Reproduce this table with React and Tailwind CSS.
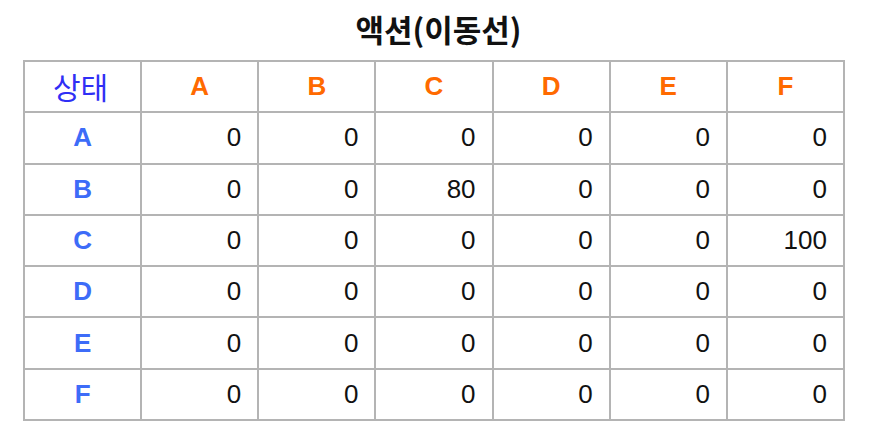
const COLS = ["A", "B", "C", "D", "E", "F"];

const ROWS = [
  { key: "A", values: [0, 0, 0, 0, 0, 0] },
  { key: "B", values: [0, 0, 80, 0, 0, 0] },
  { key: "C", values: [0, 0, 0, 0, 0, 100] },
  { key: "D", values: [0, 0, 0, 0, 0, 0] },
  { key: "E", values: [0, 0, 0, 0, 0, 0] },
  { key: "F", values: [0, 0, 0, 0, 0, 0] },
];

const cell = "h-[51.3px] border-r-2 border-b-2 border-[#b4b4b4] flex items-center";

export default function App() {
  return (
    <div className="w-[875px] h-[433px] bg-white font-['Liberation_Sans','Noto_Sans_CJK_KR',sans-serif]">
      {/* Title */}
      <div className="h-[60px] flex items-center justify-center pb-1 pl-[2px]">
        <h1 className="text-[31px] font-bold text-[#111] font-['Noto_Sans_CJK_KR',sans-serif] leading-none">
          액션(이동선)
        </h1>
      </div>

      {/* Q table */}
      <div className="ml-[23px] w-[822px] grid grid-cols-7 border-t-2 border-l-2 border-[#b4b4b4]">
        <div className={`${cell} justify-center pr-1 text-[30px] text-[#2f2ff5] font-['Noto_Sans_CJK_KR',sans-serif]`}>
          상태
        </div>
        {COLS.map(c => (
          <div key={c} className={`${cell} justify-center text-[26px] font-bold text-[#ff6a00]`}>
            {c}
          </div>
        ))}

        {ROWS.map(r => (
          <div key={r.key} className="contents">
            <div className={`${cell} justify-center text-[26px] font-bold text-[#3d6cf8]`}>{r.key}</div>
            {r.values.map((v, i) => (
              <div key={i} className={`${cell} justify-end pr-[16px] text-[26px] text-[#111]`}>
                {v}
              </div>
            ))}
          </div>
        ))}
      </div>
    </div>
  );
}
